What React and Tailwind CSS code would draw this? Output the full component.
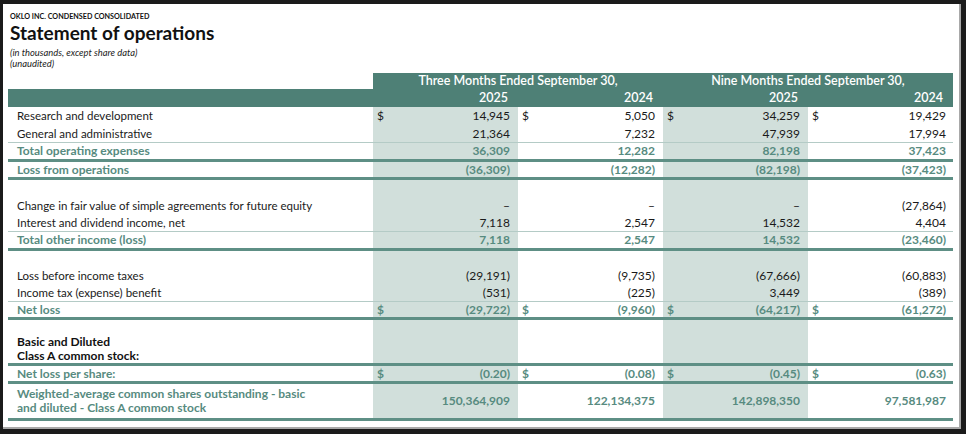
import React from "react";

const TEAL = "text-[#578b80]";

const rows = [
  { label: "Research and development", vals: ["14,945", "5,050", "34,259", "19,429"], dollar: true, h: "h-[18px]" },
  { label: "General and administrative", vals: ["21,364", "7,232", "47,939", "17,994"], h: "h-[18px]", line: "thin" },
  { label: "Total operating expenses", vals: ["36,309", "12,282", "82,198", "37,423"], h: "h-[19px]", bold: true, line: "thick" },
  { label: "Loss from operations", vals: ["(36,309)", "(12,282)", "(82,198)", "(37,423)"], h: "h-[18px]", bold: true, line: "thick" },
  { spacer: true, h: "h-[17px]" },
  { label: "Change in fair value of simple agreements for future equity", vals: ["–", "–", "–", "(27,864)"], h: "h-[17px]" },
  { label: "Interest and dividend income, net", vals: ["7,118", "2,547", "14,532", "4,404"], h: "h-[18px]", line: "thin" },
  { label: "Total other income (loss)", vals: ["7,118", "2,547", "14,532", "(23,460)"], h: "h-[19px]", bold: true, line: "thick" },
  { spacer: true, h: "h-[16px]" },
  { label: "Loss before income taxes", vals: ["(29,191)", "(9,735)", "(67,666)", "(60,883)"], h: "h-[17px]" },
  { label: "Income tax (expense) benefit", vals: ["(531)", "(225)", "3,449", "(389)"], h: "h-[18px]", line: "thin" },
  { label: "Net loss", vals: ["(29,722)", "(9,960)", "(64,217)", "(61,272)"], h: "h-[18px]", bold: true, dollar: true, line: "thick" },
];

function Cell({ shaded, dollar, value, bold, last }) {
  return (
    <div
      className={`flex items-center justify-between pl-1 ${last ? "pr-[7px]" : "pr-2"} ${
        shaded ? "bg-[#d1dfdb]" : ""
      } ${bold ? `font-bold ${TEAL}` : "text-[#1a1a1a]"}`}
    >
      <span>{dollar ? "$" : ""}</span>
      <span>{value}</span>
    </div>
  );
}

function Row({ label, vals = [], dollar, bold, line, h, spacer }) {
  const border =
    line === "thick"
      ? "border-b-[3px] border-[#5e8f85]"
      : line === "thin"
      ? "border-b border-[#b4cbc6]"
      : "";
  return (
    <div className={`grid grid-cols-[365px_145px_145px_145px_145px] leading-none ${h} ${border}`}>
      <div
        className={`flex items-center pl-[9px] ${
          bold ? `text-[12px] font-bold ${TEAL}` : "text-[11.5px] text-[#1a1a1a]"
        }`}
      >
        {spacer ? "" : label}
      </div>
      {[0, 1, 2, 3].map((i) => (
        <Cell
          key={i}
          shaded={i % 2 === 0}
          dollar={dollar}
          value={vals[i]}
          bold={bold}
          last={i === 3}
        />
      ))}
    </div>
  );
}

export default function App() {
  return (
    <div className="h-[434px] w-[966px] bg-[#1b1b1b] pl-[3px] pt-[4px] font-['Lato','Liberation_Sans',sans-serif]">
      <div className="flex h-[425px] w-[958px] flex-col border-b-2 border-r-2 border-[#a8a8a8] bg-white">
        <div className="pl-[7px] pt-[9px]">
          <p className="text-[7.2px] font-bold uppercase leading-[8px] text-[#111]">
            Oklo Inc. Condensed Consolidated
          </p>
          <h1 className="mt-[1px] text-[19px] font-bold leading-[22px] text-[#111]">
            Statement of operations
          </h1>
          <p className="mt-[3px] text-[9.4px] italic leading-[11px] text-[#222]">
            (in thousands, except share data)
          </p>
          <p className="text-[9.4px] italic leading-[11px] text-[#222]">(unaudited)</p>
        </div>

        <div className="ml-[5px] mt-[4px] w-[945px] text-[12px]">
          <div className="grid h-[16px] grid-cols-[365px_290px_290px] text-[12.5px] leading-none">
            <div />
            <div className="flex items-center justify-center bg-[#4e8076] font-semibold text-white">
              Three Months Ended September 30,
            </div>
            <div className="flex items-center justify-center bg-[#4e8076] font-semibold text-white">
              Nine Months Ended September 30,
            </div>
          </div>
          <div className="grid h-[18px] grid-cols-[365px_145px_145px_145px_145px] bg-[#4e8076] text-[12.5px] font-semibold leading-none text-white">
            <div />
            <div className="flex items-center justify-end pr-[10px]">2025</div>
            <div className="flex items-center justify-end pr-[10px]">2024</div>
            <div className="flex items-center justify-end pr-[10px]">2025</div>
            <div className="flex items-center justify-end pr-[10px]">2024</div>
          </div>

          {rows.map((r, i) => (
            <Row key={i} {...r} />
          ))}

          <div className="grid h-[46px] grid-cols-[365px_145px_145px_145px_145px] border-b-[3px] border-[#5e8f85]">
            <div className="flex flex-col justify-end pl-[9px] text-[12px] font-bold leading-[14px] text-[#111]">
              <span>Basic and Diluted</span>
              <span>Class A common stock:</span>
            </div>
            <div className="bg-[#d1dfdb]" />
            <div />
            <div className="bg-[#d1dfdb]" />
            <div />
          </div>
          <Row
            label="Net loss per share:"
            vals={["(0.20)", "(0.08)", "(0.45)", "(0.63)"]}
            dollar
            bold
            line="thick"
            h="h-[18px]"
          />
          <div
            className={`grid h-[37px] grid-cols-[365px_145px_145px_145px_145px] border-b-[3px] border-[#5e8f85] font-bold leading-none ${TEAL}`}
          >
            <div className="flex flex-col justify-center pl-[9px] text-[12px] leading-[14px]">
              <span>Weighted-average common shares outstanding - basic</span>
              <span>and diluted - Class A common stock</span>
            </div>
            <div className="flex items-center justify-end bg-[#d1dfdb] pr-2">150,364,909</div>
            <div className="flex items-center justify-end pr-2">122,134,375</div>
            <div className="flex items-center justify-end bg-[#d1dfdb] pr-2">142,898,350</div>
            <div className="flex items-center justify-end pr-[7px]">97,581,987</div>
          </div>
        </div>
      </div>
    </div>
  );
}
